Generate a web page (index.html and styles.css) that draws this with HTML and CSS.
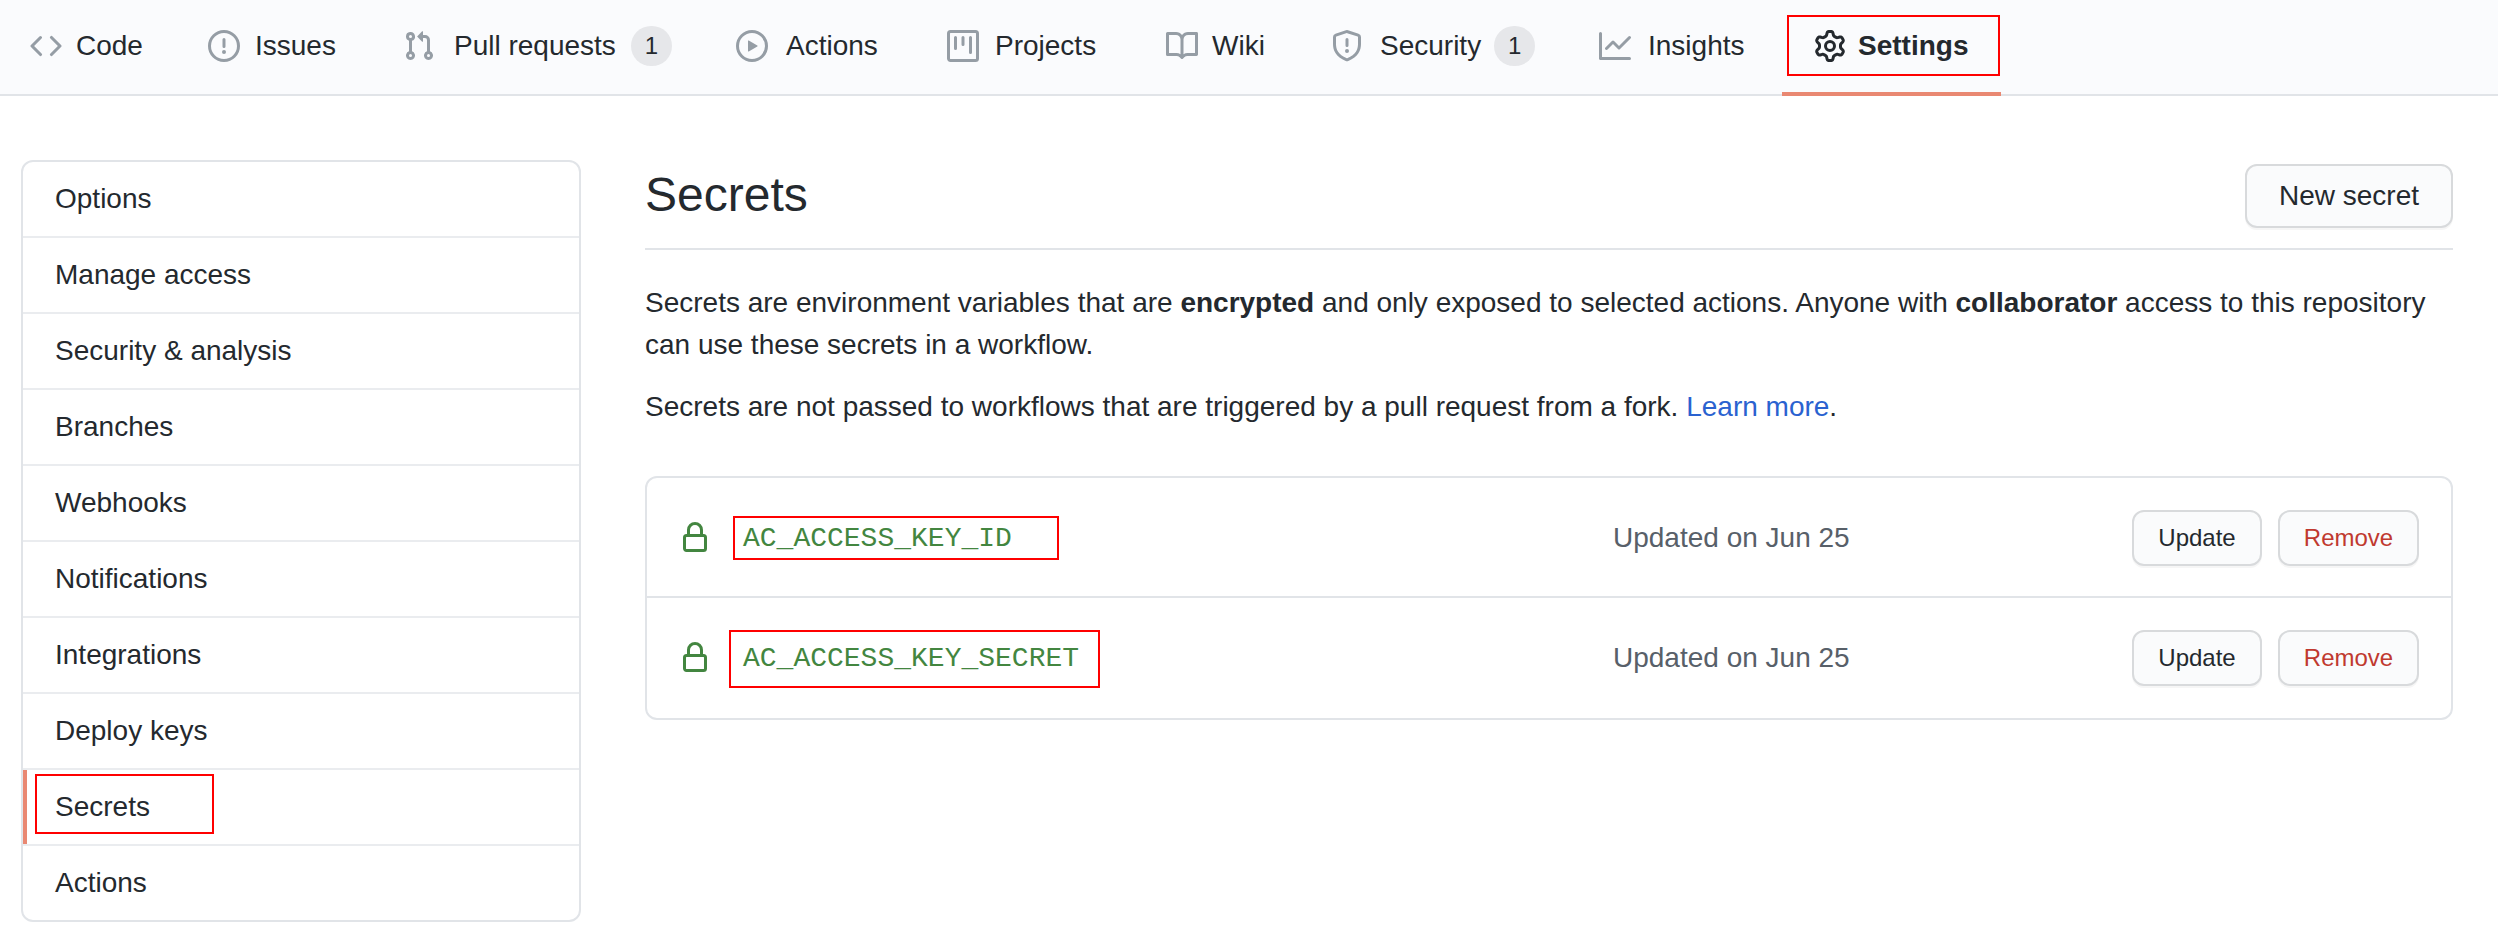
FILE: index.html
```html
<!DOCTYPE html>
<html lang="en">
<head>
<meta charset="utf-8">
<title>Secrets</title>
<link rel="stylesheet" href="styles.css">
</head>
<body>
<nav class="tabs">
  <a class="tab tab-code"><svg class="icon" viewBox="0 0 16 16"><path fill-rule="evenodd" d="M4.72 3.22a.75.75 0 011.06 1.06L2.06 8l3.72 3.72a.75.75 0 11-1.06 1.06L.47 8.53a.75.75 0 010-1.06l4.25-4.25zm6.56 0a.75.75 0 10-1.06 1.06L13.94 8l-3.72 3.72a.75.75 0 101.06 1.06l4.25-4.25a.75.75 0 000-1.06l-4.25-4.25z"/></svg><span class="label">Code</span></a>
  <a class="tab tab-issues"><svg class="icon" viewBox="0 0 16 16"><path fill-rule="evenodd" d="M8 1.5a6.5 6.5 0 100 13 6.5 6.5 0 000-13zM0 8a8 8 0 1116 0A8 8 0 010 8zm9 3a1 1 0 11-2 0 1 1 0 012 0zm-.25-6.25a.75.75 0 00-1.5 0v3.5a.75.75 0 001.5 0v-3.5z"/></svg><span class="label">Issues</span></a>
  <a class="tab tab-pulls"><svg class="icon" viewBox="0 0 16 16"><path fill-rule="evenodd" d="M7.177 3.073L9.573.677A.25.25 0 0110 .854v4.792a.25.25 0 01-.427.177L7.177 3.427a.25.25 0 010-.354zM3.75 2.5a.75.75 0 100 1.5.75.75 0 000-1.5zm-2.25.75a2.25 2.25 0 113 2.122v5.256a2.251 2.251 0 11-1.5 0V5.372A2.25 2.25 0 011.5 3.25zM11 2.5h-1V4h1a1 1 0 011 1v5.628a2.251 2.251 0 101.5 0V5A2.5 2.5 0 0011 2.5zm1 10.25a.75.75 0 111.5 0 .75.75 0 01-1.5 0zM3.75 12a.75.75 0 100 1.5.75.75 0 000-1.5z"/></svg><span class="label">Pull requests</span><span class="counter">1</span></a>
  <a class="tab tab-actions"><svg class="icon" viewBox="0 0 16 16"><path fill-rule="evenodd" d="M1.5 8a6.5 6.5 0 1113 0 6.5 6.5 0 01-13 0zM8 0a8 8 0 100 16A8 8 0 008 0zM6.379 5.227A.25.25 0 006 5.442v5.117a.25.25 0 00.379.214l4.264-2.559a.25.25 0 000-.428L6.379 5.227z"/></svg><span class="label">Actions</span></a>
  <a class="tab tab-projects"><svg class="icon" viewBox="0 0 16 16"><path fill-rule="evenodd" d="M1.75 0A1.75 1.75 0 000 1.75v12.5C0 15.216.784 16 1.75 16h12.5A1.75 1.75 0 0016 14.25V1.75A1.75 1.75 0 0014.25 0H1.75zM1.5 1.75a.25.25 0 01.25-.25h12.5a.25.25 0 01.25.25v12.5a.25.25 0 01-.25.25H1.75a.25.25 0 01-.25-.25V1.75zM11.75 3a.75.75 0 00-.75.75v7.5a.75.75 0 001.5 0v-7.5a.75.75 0 00-.75-.75zm-8.25.75a.75.75 0 011.5 0v5.5a.75.75 0 01-1.5 0v-5.5zM8 3a.75.75 0 00-.75.75v3.5a.75.75 0 001.5 0v-3.5A.75.75 0 008 3z"/></svg><span class="label">Projects</span></a>
  <a class="tab tab-wiki"><svg class="icon" viewBox="0 0 16 16"><path fill-rule="evenodd" d="M0 1.75A.75.75 0 01.75 1h4.253c1.227 0 2.317.59 3 1.501A3.744 3.744 0 0111.006 1h4.245a.75.75 0 01.75.75v10.5a.75.75 0 01-.75.75h-4.507a2.25 2.25 0 00-1.591.659l-.622.621a.75.75 0 01-1.06 0l-.622-.621A2.25 2.25 0 005.258 13H.75a.75.75 0 01-.75-.75V1.75zm8.755 3a2.25 2.25 0 012.25-2.25H14.5v9h-3.757c-.71 0-1.4.201-1.992.572l.004-7.322zm-1.504 7.324l.004-5.073-.002-2.253A2.25 2.25 0 005.003 2.5H1.5v9h3.757a3.75 3.75 0 011.994.574z"/></svg><span class="label">Wiki</span></a>
  <a class="tab tab-security"><svg class="icon" viewBox="0 0 16 16"><path fill-rule="evenodd" d="M7.467.133a1.75 1.75 0 011.066 0l5.25 1.68A1.75 1.75 0 0115 3.48V7c0 1.566-.32 3.182-1.303 4.682-.983 1.498-2.585 2.813-5.032 3.855a1.7 1.7 0 01-1.33 0c-2.447-1.042-4.049-2.357-5.032-3.855C1.32 10.182 1 8.566 1 7V3.48a1.75 1.75 0 011.217-1.667l5.25-1.68zm.61 1.429a.25.25 0 00-.153 0l-5.25 1.68a.25.25 0 00-.174.238V7c0 1.358.275 2.666 1.057 3.86.784 1.194 2.121 2.34 4.366 3.297a.2.2 0 00.154 0c2.245-.956 3.582-2.104 4.366-3.298C13.225 9.666 13.5 8.36 13.5 7V3.48a.25.25 0 00-.174-.237l-5.25-1.68zM9 10.5a1 1 0 11-2 0 1 1 0 012 0zm-.25-5.75a.75.75 0 10-1.5 0v3a.75.75 0 001.5 0v-3z"/></svg><span class="label">Security</span><span class="counter">1</span></a>
  <a class="tab tab-insights"><svg class="icon" viewBox="0 0 16 16"><path fill-rule="evenodd" d="M1.5 1.75a.75.75 0 00-1.5 0v12.5c0 .414.336.75.75.75h14.5a.75.75 0 000-1.5H1.5V1.75zm14.28 2.53a.75.75 0 00-1.06-1.06L10 7.94 7.53 5.47a.75.75 0 00-1.06 0L3.22 8.72a.75.75 0 001.06 1.06L7 7.06l2.47 2.47a.75.75 0 001.06 0l5.25-5.25z"/></svg><span class="label">Insights</span></a>
  <a class="tab tab-settings"><svg class="icon" viewBox="0 0 16 16"><path fill-rule="evenodd" d="M7.429 1.525a6.593 6.593 0 011.142 0c.036.003.108.036.137.146l.289 1.105c.147.56.55.967.997 1.189.174.086.341.183.501.29.417.278.97.423 1.53.27l1.102-.303c.11-.03.175.016.195.046.219.31.41.641.573.989.014.031.022.11-.059.19l-.815.806c-.411.406-.562.957-.53 1.456a4.588 4.588 0 010 .582c-.032.499.119 1.05.53 1.456l.815.806c.08.08.073.159.059.19a6.494 6.494 0 01-.573.99c-.02.029-.086.074-.195.045l-1.103-.303c-.559-.153-1.112-.008-1.529.27-.16.107-.327.204-.5.29-.449.222-.851.628-.998 1.189l-.289 1.105c-.029.11-.101.143-.137.146a6.613 6.613 0 01-1.142 0c-.036-.003-.108-.037-.137-.146l-.289-1.105c-.147-.56-.55-.967-.997-1.189a4.502 4.502 0 01-.501-.29c-.417-.278-.97-.423-1.53-.27l-1.102.303c-.11.03-.175-.016-.195-.046a6.492 6.492 0 01-.573-.989c-.014-.031-.022-.11.059-.19l.815-.806c.411-.406.562-.957.53-1.456a4.587 4.587 0 010-.582c.032-.499-.119-1.05-.53-1.456l-.815-.806c-.08-.08-.073-.159-.059-.19a6.44 6.44 0 01.573-.99c.02-.029.086-.075.195-.045l1.103.303c.559.153 1.112.008 1.529-.27.16-.107.327-.204.5-.29.449-.222.851-.628.998-1.189l.289-1.105c.029-.11.101-.143.137-.146zM8 0c-.236 0-.47.01-.701.03-.743.065-1.29.615-1.458 1.261l-.29 1.106c-.017.066-.078.158-.211.224a5.994 5.994 0 00-.668.386c-.123.082-.233.09-.3.071L3.27 2.776c-.644-.177-1.392.02-1.82.63a7.977 7.977 0 00-.704 1.217c-.315.675-.111 1.422.363 1.891l.815.806c.05.048.098.147.088.294a6.084 6.084 0 000 .772c.01.147-.038.246-.088.294l-.815.806c-.474.469-.678 1.216-.363 1.891.2.428.436.835.704 1.218.428.609 1.176.806 1.82.63l1.103-.303c.066-.019.176-.011.299.071.213.143.436.272.668.386.133.066.194.158.212.224l.289 1.106c.169.646.715 1.196 1.458 1.26a8.094 8.094 0 001.402 0c.743-.064 1.29-.614 1.458-1.26l.29-1.106c.017-.066.078-.158.211-.224a5.98 5.98 0 00.668-.386c.123-.082.233-.09.3-.071l1.102.302c.644.177 1.392-.02 1.82-.63.268-.382.505-.789.704-1.217.315-.675.111-1.422-.364-1.891l-.814-.806c-.05-.048-.098-.147-.088-.294a6.1 6.1 0 000-.772c-.01-.147.039-.246.088-.294l.814-.806c.475-.469.679-1.216.364-1.891a7.992 7.992 0 00-.704-1.218c-.428-.609-1.176-.806-1.82-.63l-1.103.303c-.066.019-.176.011-.299-.071a5.991 5.991 0 00-.668-.386c-.133-.066-.194-.158-.212-.224L10.16 1.29C9.99.645 9.444.095 8.701.031A8.094 8.094 0 008 0zm1.5 8a1.5 1.5 0 11-3 0 1.5 1.5 0 013 0zM11 8a3 3 0 11-6 0 3 3 0 016 0z"/></svg><span class="label">Settings</span><span class="mark mark-settings"></span></a>
</nav>
<div class="page">
  <aside class="menu">
    <a class="menu-item">Options</a>
    <a class="menu-item">Manage access</a>
    <a class="menu-item">Security &amp; analysis</a>
    <a class="menu-item">Branches</a>
    <a class="menu-item">Webhooks</a>
    <a class="menu-item">Notifications</a>
    <a class="menu-item">Integrations</a>
    <a class="menu-item">Deploy keys</a>
    <a class="menu-item menu-item-current">Secrets<span class="mark mark-menu"></span></a>
    <a class="menu-item">Actions</a>
  </aside>
  <main class="content">
    <header class="head">
      <h1 class="title">Secrets</h1>
      <button class="btn btn-new">New secret</button>
    </header>
    <p class="text">Secrets are environment variables that are <strong>encrypted</strong> and only exposed to selected actions. Anyone with <strong>collaborator</strong> access to this repository can use these secrets in a workflow.</p>
    <p class="text">Secrets are not passed to workflows that are triggered by a pull request from a fork. <a class="link">Learn more</a>.</p>
    <section class="box">
      <div class="row row-first">
        <svg class="icon lock" viewBox="0 0 16 16"><path fill-rule="evenodd" d="M4 4v2h-.25A1.75 1.75 0 002 7.75v5.5c0 .966.784 1.75 1.75 1.75h8.5A1.75 1.75 0 0014 13.25v-5.5A1.75 1.75 0 0012.25 6H12V4a4 4 0 10-8 0zm6.5 2V4a2.5 2.5 0 10-5 0v2h5zM12 7.5h.25a.25.25 0 01.25.25v5.5a.25.25 0 01-.25.25h-8.5a.25.25 0 01-.25-.25v-5.5a.25.25 0 01.25-.25H12z"/></svg>
        <code class="name">AC_ACCESS_KEY_ID</code>
        <span class="date">Updated on Jun 25</span>
        <button class="btn btn-update">Update</button>
        <button class="btn btn-remove">Remove</button>
        <span class="mark mark-id"></span>
      </div>
      <div class="row">
        <svg class="icon lock" viewBox="0 0 16 16"><path fill-rule="evenodd" d="M4 4v2h-.25A1.75 1.75 0 002 7.75v5.5c0 .966.784 1.75 1.75 1.75h8.5A1.75 1.75 0 0014 13.25v-5.5A1.75 1.75 0 0012.25 6H12V4a4 4 0 10-8 0zm6.5 2V4a2.5 2.5 0 10-5 0v2h5zM12 7.5h.25a.25.25 0 01.25.25v5.5a.25.25 0 01-.25.25h-8.5a.25.25 0 01-.25-.25v-5.5a.25.25 0 01.25-.25H12z"/></svg>
        <code class="name">AC_ACCESS_KEY_SECRET</code>
        <span class="date">Updated on Jun 25</span>
        <button class="btn btn-update">Update</button>
        <button class="btn btn-remove">Remove</button>
        <span class="mark mark-secret"></span>
      </div>
    </section>
  </main>
</div>
</body>
</html>
```
FILE: styles.css
```css
* { box-sizing: border-box; }
body {
  margin: 0;
  background: #fff;
  color: #24292e;
  font: 28px/42px "Liberation Sans", Arial, sans-serif;
}
.tabs {
  display: grid;
  grid-template-columns: 178px 195px 333px 211px 219px 165px 268px 183px 219px;
  padding-left: 30px;
  height: 96px;
  background: #fafbfd;
  border-bottom: 2px solid #e1e4e8;
}
.tab {
  display: flex;
  align-items: center;
  position: relative;
  height: 92px;
  white-space: nowrap;
}
.icon { display: block; flex: none; width: 32px; height: 32px; fill: #959da5; }
.label { margin-left: 15px; }
.tab-code .label, .tab-wiki .label { margin-left: 14px; }
.tab-pulls .label { margin-left: 19px; }
.tab-actions .label { margin-left: 18px; }
.tab-projects .label { margin-left: 16px; }
.tab-security .label, .tab-insights .label { margin-left: 17px; }
.counter {
  width: 41px;
  height: 40px;
  margin-left: 15px;
  border-radius: 20px;
  background: #e6e7ea;
  font-size: 24px;
  line-height: 40px;
  text-align: center;
}
.tab-security .counter { margin-left: 13px; }
.tab-settings {
  height: 96px;
  padding: 0 0 0 32px;
  border-bottom: 4px solid #e98872;
  font-weight: bold;
}
.tab-settings .label { margin-left: 12px; }
.tab-settings .icon { fill: #24292e; }
.mark { position: absolute; border: 2px solid #f00; }
.mark-settings { left: 5px; top: 15px; width: 213px; height: 61px; }
.mark-menu { left: 12px; top: 4px; width: 179px; height: 60px; }
.mark-id { left: 86px; top: 38px; width: 326px; height: 44px; }
.mark-secret { left: 82px; top: 32px; width: 371px; height: 58px; }
.page { display: flex; align-items: flex-start; gap: 64px; padding: 64px 45px 0 21px; }
.menu { flex: none; width: 560px; border: 2px solid #e1e4e8; border-radius: 12px; overflow: hidden; }
.menu-item {
  display: block;
  position: relative;
  height: 76px;
  padding: 16px 32px;
  border-bottom: 2px solid #eaecef;
}
.menu-item:last-child { height: 74px; border-bottom: 0; }
.menu-item-current::before {
  content: "";
  position: absolute;
  left: 0;
  top: 0;
  width: 4px;
  height: 74px;
  background: #e98872;
}
.content { flex: 1; }
.head {
  display: flex;
  align-items: flex-start;
  justify-content: space-between;
  height: 90px;
  margin-bottom: 32px;
  padding-top: 4px;
  border-bottom: 2px solid #e1e4e8;
}
.title { margin: -5px 0 0; font-size: 48px; line-height: 72px; font-weight: 400; }
.btn {
  flex: none;
  height: 56px;
  padding: 0;
  border: 2px solid #d8dadc;
  border-radius: 12px;
  background: #fafbfc;
  box-shadow: 0 2px 0 rgba(27, 31, 35, .04);
  color: #24292e;
  font: 24px/40px "Liberation Sans", Arial, sans-serif;
}
.btn-new { width: 208px; height: 64px; font-size: 28px; }
.btn-update { width: 130px; margin-right: 16px; }
.btn-remove { width: 141px; color: #c0392f; }
.text { margin: 0 0 20px; }
.link { color: #2a62d0; }
.box { margin-top: 48px; border: 2px solid #e1e4e8; border-radius: 12px; }
.row { display: flex; align-items: center; position: relative; height: 120px; padding: 0 32px; }
.row-first { padding-top: 2px; border-bottom: 2px solid #e1e4e8; }
.lock { fill: #438640; }
.name {
  width: 870px;
  margin-left: 32px;
  padding-top: 2px;
  color: #438640;
  font: 28px/42px "Liberation Mono", "Courier New", monospace;
}
.date { flex: 1; color: #586069; }
```
